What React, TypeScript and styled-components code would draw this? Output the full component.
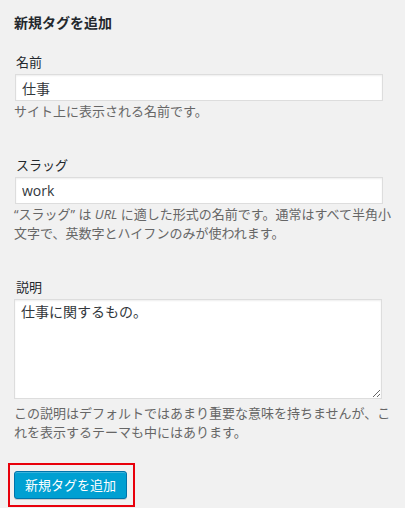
import React from "react";
import styled, { createGlobalStyle } from "styled-components";

const Global = createGlobalStyle`
  html, body {
    margin: 0;
    padding: 0;
    background: #f1f1f1;
  }
  body {
    font-family: "Open Sans", "Noto Sans CJK JP", sans-serif;
    font-size: 13px;
    color: #444;
  }
`;

const Wrap = styled.div`
  width: 387px;
  padding: 13px 0 0 14px;
`;

const Title = styled.h2`
  margin: 0;
  font-size: 14px;
  line-height: 20px;
  font-weight: 700;
  color: #23282d;
`;

const Field = styled.div<{ $top: number }>`
  margin-top: ${(p) => p.$top}px;
`;

const Label = styled.label`
  display: block;
  font-size: 13px;
  line-height: 20px;
  color: #23282d;
  padding-left: 2px;
  margin-bottom: 2px;
`;

const Input = styled.input`
  display: block;
  box-sizing: border-box;
  width: 368px;
  height: 27px;
  margin: 0 0 0 1px;
  padding: 0 6px;
  border: 1px solid #ddd;
  box-shadow: inset 0 1px 2px rgba(0, 0, 0, 0.07);
  background: #fff;
  font-family: "Open Sans", "Noto Sans CJK JP", sans-serif;
  font-size: 14px;
  color: #32373c;
  outline: none;
`;

const Area = styled.textarea`
  display: block;
  box-sizing: border-box;
  width: 368px;
  height: 100px;
  margin: 0;
  padding: 2px 6px;
  border: 1px solid #ddd;
  box-shadow: inset 0 1px 2px rgba(0, 0, 0, 0.07);
  background: #fff;
  font-family: "Open Sans", "Noto Sans CJK JP", sans-serif;
  font-size: 14px;
  line-height: 1.4;
  color: #32373c;
  outline: none;
`;

const Desc = styled.p<{ $top: number }>`
  margin: ${(p) => p.$top}px 0 0;
  font-size: 13px;
  line-height: 19.5px;
  color: #666;
`;

const Highlight = styled.div`
  display: inline-block;
  margin: 20px 0 0 -6px;
  padding: 6px 6px 6px 4px;
  border: 2px solid #e8000b;
`;

const Button = styled.button`
  display: block;
  box-sizing: border-box;
  height: 28px;
  padding: 0 10px 1px;
  border: 1px solid #0073aa;
  border-radius: 3px;
  background: #00a0d2;
  box-shadow: inset 0 1px 0 rgba(120, 200, 230, 0.5), 0 1px 0 rgba(0, 0, 0, 0.15);
  color: #fff;
  font-family: "Open Sans", "Noto Sans CJK JP", sans-serif;
  font-size: 13px;
  line-height: 26px;
  cursor: pointer;
`;

export default function App() {
  return (
    <>
      <Global />
      <Wrap>
        <Title>新規タグを追加</Title>
        <Field $top={19}>
          <Label>名前</Label>
          <Input defaultValue="仕事" />
          <Desc $top={1}>サイト上に表示される名前です。</Desc>
        </Field>
        <Field $top={33}>
          <Label>スラッグ</Label>
          <Input defaultValue="work" />
          <Desc $top={1}>
            “スラッグ” は <i>URL</i> に適した形式の名前です。通常はすべて半角小文字で、英数字とハイフンのみが使われます。
          </Desc>
        </Field>
        <Field $top={33}>
          <Label>説明</Label>
          <Area defaultValue="仕事に関するもの。" />
          <Desc $top={5}>
            この説明はデフォルトではあまり重要な意味を持ちませんが、これを表示するテーマも中にはあります。
          </Desc>
        </Field>
        <Highlight>
          <Button>新規タグを追加</Button>
        </Highlight>
      </Wrap>
    </>
  );
}
